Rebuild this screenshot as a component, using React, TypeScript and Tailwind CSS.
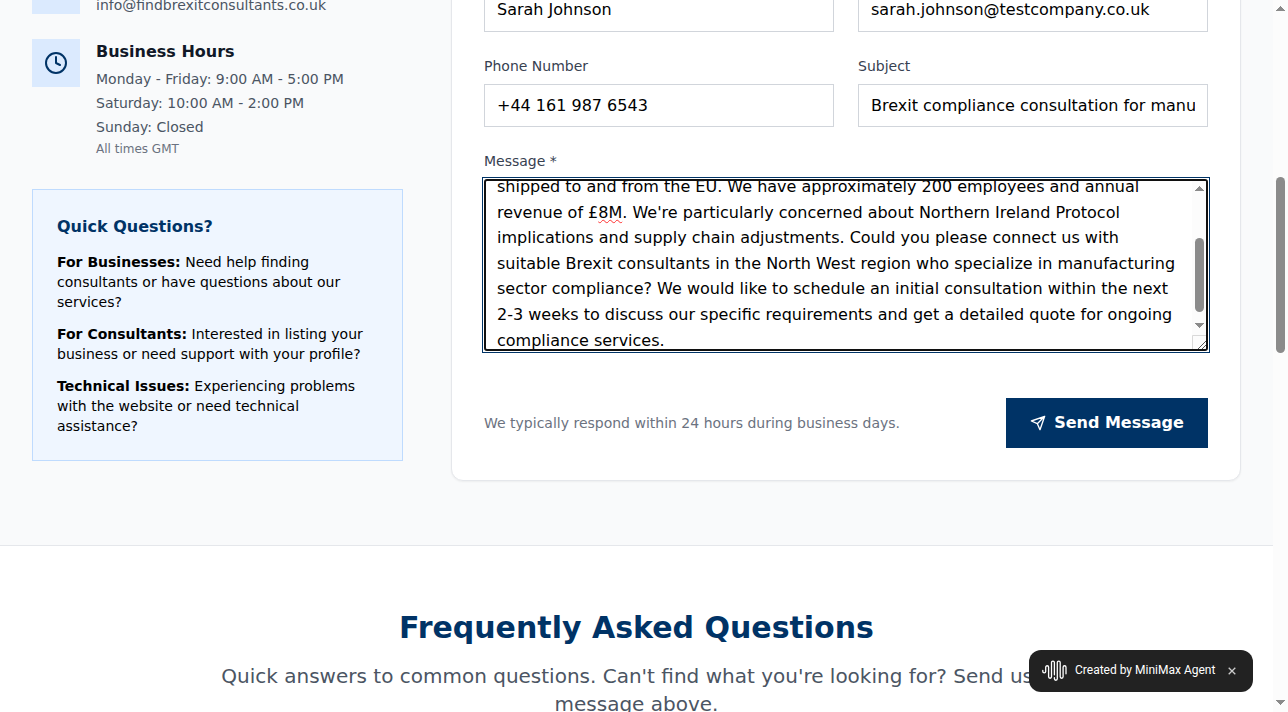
import React from "react";
import { Clock } from "lucide-react";

function Input({ value, raised = false }: { value: string; raised?: boolean }) {
  return (
    <div className="h-[43px] border border-[#d1d5db] bg-white px-3 text-base whitespace-nowrap text-black">
      <div className={raised ? "overflow-hidden leading-[39px]" : "overflow-hidden leading-[41px]"}>{value}</div>
    </div>
  );
}

function Field({ label, value }: { label: string; value: string }) {
  return (
    <div className="w-[350px]">
      <div className="mb-2 h-5 text-sm leading-5 text-[#374151]">{label}</div>
      <Input value={value} />
    </div>
  );
}

function Arrow({ down = false }: { down?: boolean }) {
  return (
    <svg width="9" height="5" viewBox="0 0 9 5" className="shrink-0" shapeRendering="crispEdges">
      <path d={down ? "M0 0H9L4.5 5Z" : "M0 5H9L4.5 0Z"} fill="#8b8b8b" />
    </svg>
  );
}

const lines = [
  "shipped to and from the EU. We have approximately 200 employees and annual",
  "",
  "implications and supply chain adjustments. Could you please connect us with",
  "suitable Brexit consultants in the North West region who specialize in manufacturing",
  "sector compliance? We would like to schedule an initial consultation within the next",
  "2-3 weeks to discuss our specific requirements and get a detailed quote for ongoing",
  "compliance services.",
];

function Message() {
  return (
    <div className="-mx-[2px] -mt-[2px] border border-[#003366] bg-white p-px">
      <div className="flex h-[172px] overflow-hidden rounded-[3px] border-2 border-[#101010] bg-white">
        <div className="flex-1 overflow-hidden pl-[11px]">
          <div className="-mt-[7px] text-base leading-[25.6px] whitespace-nowrap text-black">
            {lines.map((l, i) => (
              <div key={i}>
                {i === 1 ? (
                  <>
                    revenue of £
                    <span className="underline decoration-[#ff3030] decoration-wavy decoration-[1px] underline-offset-[1px]">8M</span>
                    . We're particularly concerned about Northern Ireland Protocol
                  </>
                ) : (
                  l
                )}
              </div>
            ))}
          </div>
        </div>
        <div className="flex w-[14px] flex-col items-center bg-[#fcfcfc] pt-[5px]">
          <Arrow />
          <div className="mt-[47px] h-[74px] w-[9px] shrink-0 rounded-full bg-[#8b8b8b]" />
          <div className="mt-[11px] flex h-[5px] shrink-0"><Arrow down /></div>
          <svg width="14" height="14" viewBox="0 0 14 14" className="mt-[7px] shrink-0">
            <path d="M.5 14V.5H14" stroke="#d9d9d9" fill="none" />
            <path d="M6 14L14 6M10 14L14 10" stroke="#555" fill="none" />
          </svg>
        </div>
      </div>
    </div>
  );
}

export default function App() {
  return (
    <div className="relative flex h-[712px] w-[1288px] overflow-hidden bg-white font-['DejaVu_Sans',sans-serif]">
      <div className="flex h-[712px] w-[1273px] shrink-0 flex-col overflow-hidden">
        <section className="flex h-[546px] shrink-0 items-start border-b border-[#e5e7eb] bg-[#f9fafb] pl-8">
          <div className="w-[371px] shrink-0">
            <div className="flex h-[14px]">
              <div className="mr-4 h-[14px] w-12 bg-[#dbeafe]" />
              <div className="-mt-[7px] text-sm leading-6 text-[#4b5563]">info@findbrexitconsultants.co.uk</div>
            </div>
            <div className="mt-[25px] flex">
              <div className="mr-4 flex size-12 items-center justify-center bg-[#dbeafe]">
                <Clock size={24} strokeWidth={2} className="text-[#003366]" />
              </div>
              <div className="text-sm leading-6 text-[#4b5563]">
                <h3 className="mb-[2px] text-base leading-[26px] font-bold text-[#111827]">Business Hours</h3>
                <p>Monday - Friday: 9:00 AM - 5:00 PM</p>
                <p>Saturday: 10:00 AM - 2:00 PM</p>
                <p>Sunday: Closed</p>
                <p className="mt-[2px] text-xs leading-4 text-[#6b7280]">All times GMT</p>
              </div>
            </div>
            <div className="mt-8 h-[272px] border border-[#bfdbfe] bg-[#eff6ff] p-6 text-sm leading-5 text-black">
              <h3 className="mb-3 text-base leading-[26px] font-bold text-[#003366]">Quick Questions?</h3>
              <p><b>For Businesses:</b> Need help finding<br />consultants or have questions about our<br />services?</p>
              <p className="mt-3"><b>For Consultants:</b> Interested in listing your<br />business or need support with your profile?</p>
              <p className="mt-3"><b>Technical Issues:</b> Experiencing problems<br />with the website or need technical<br />assistance?</p>
            </div>
          </div>
          <div className="-mt-3 ml-12 h-[493px] w-[790px] rounded-b-xl border border-[#e5e7eb] bg-white px-8 shadow-[0_1px_2px_rgba(0,0,0,0.05)]">
            <div className="flex gap-6">
              <div className="w-[350px]"><Input raised value="Sarah Johnson" /></div>
              <div className="w-[350px]"><Input raised value="sarah.johnson@testcompany.co.uk" /></div>
            </div>
            <div className="mt-6 flex gap-6">
              <Field label="Phone Number" value="+44 161 987 6543" />
              <Field label="Subject" value="Brexit compliance consultation for manufacturing" />
            </div>
            <div className="mt-6 mb-2 h-5 text-sm leading-5 text-[#374151]">Message *</div>
            <Message />
            <div className="mt-[45px] flex items-center justify-between">
              <p className="text-sm text-[#6b7280]">We typically respond within 24 hours during business days.</p>
              <button className="flex h-[50px] w-[202px] items-center justify-center gap-2 bg-[#003366] text-base font-bold text-white">
                <svg width="16" height="16" viewBox="0 0 24 24" fill="none" stroke="currentColor" strokeWidth="2" strokeLinecap="round" strokeLinejoin="round">
                  <path d="M22 2L15 22L11 13L2 9L22 2ZM22 2L11 13" />
                </svg>
                Send Message
              </button>
            </div>
          </div>
        </section>
        <section className="shrink-0 pt-16 text-center">
          <h2 className="text-[30px] leading-9 font-bold text-[#003366]">Frequently Asked Questions</h2>
          <p className="mt-4 text-xl leading-7 text-[#4b5563]">Quick answers to common questions. Can't find what you're looking for? Send us a<br />message above.</p>
        </section>
      </div>
      <div className="flex h-[712px] w-[15px] shrink-0 flex-col items-center bg-[#fcfcfc] pt-[6px]">
        <Arrow />
        <div className="mt-[166px] h-[176px] w-[9px] shrink-0 rounded-full bg-[#8b8b8b]" />
        <div className="mt-auto mb-[7px] flex"><Arrow down /></div>
      </div>
      <div className="absolute top-[650px] left-[1029px] flex h-[42px] w-[224px] items-center rounded-xl bg-[#222] pl-[13px] font-['Roboto',sans-serif] text-xs leading-4 font-normal text-white">
        <svg width="25" height="22" viewBox="0 0 25 22" fill="none" stroke="white" strokeWidth="1.3" strokeLinecap="round">
          <path d="M.8 10.5v1a1.45 1.45 0 0 0 2.9 0V7.2a1.45 1.45 0 0 1 2.9 0v9.6a1.45 1.45 0 0 0 2.9 0V2.6a1.45 1.45 0 0 1 2.9 0v12.2M12.4 17.6v1.2a1.45 1.45 0 0 0 2.9 0V2.6a1.45 1.45 0 0 1 2.9 0v14.2a1.45 1.45 0 0 0 2.9 0V7.2a1.45 1.45 0 0 1 2.9 0v6.6" />
        </svg>
        <span className="ml-2 w-[141px] -translate-y-px whitespace-nowrap">Created by MiniMax Agent</span>
        <svg width="8" height="8" viewBox="0 0 8 8" className="ml-3" stroke="#ccc" strokeWidth="1.3"><path d="M.7.7L7.3 7.3M7.3.7L.7 7.3" /></svg>
      </div>
    </div>
  );
}
